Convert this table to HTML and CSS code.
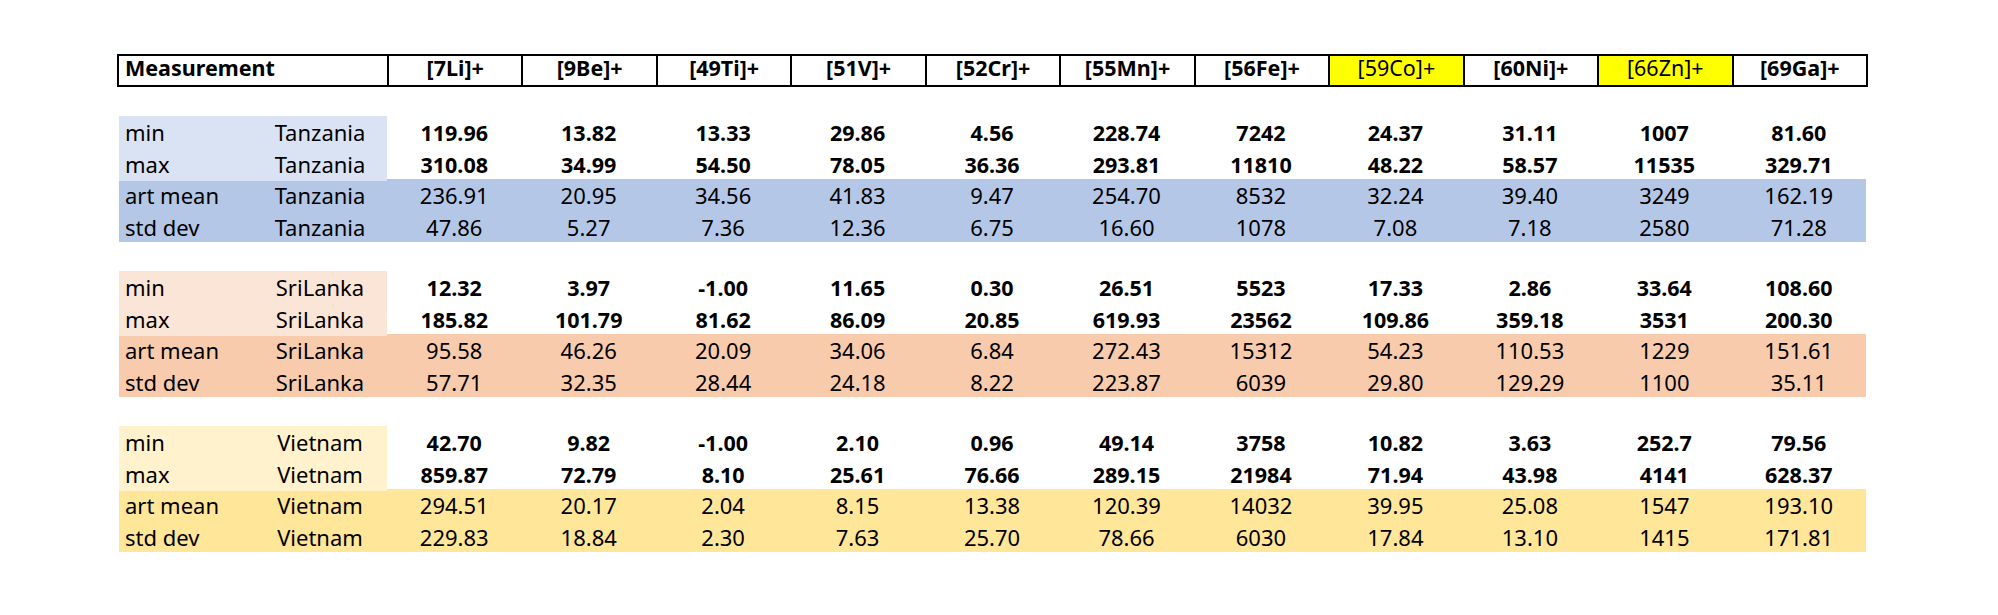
FILE: index.html
```html
<!DOCTYPE html>
<html>
<head>
<meta charset="utf-8">
<link rel="stylesheet" href="styles.css">
</head>
<body>
<div class="sheet">
  <div class="hdr">
    <div class="h first">Measurement</div>
    <div class="h">[7Li]+</div>
    <div class="h">[9Be]+</div>
    <div class="h">[49Ti]+</div>
    <div class="h">[51V]+</div>
    <div class="h">[52Cr]+</div>
    <div class="h">[55Mn]+</div>
    <div class="h">[56Fe]+</div>
    <div class="h hl">[59Co]+</div>
    <div class="h">[60Ni]+</div>
    <div class="h hl">[66Zn]+</div>
    <div class="h">[69Ga]+</div>
  </div>

  <div class="group tz">
    <div class="row ext"><div class="stat">min</div><div class="reg">Tanzania</div><div class="v">119.96</div><div class="v">13.82</div><div class="v">13.33</div><div class="v">29.86</div><div class="v">4.56</div><div class="v">228.74</div><div class="v">7242</div><div class="v">24.37</div><div class="v">31.11</div><div class="v">1007</div><div class="v">81.60</div></div>
    <div class="row ext"><div class="stat">max</div><div class="reg">Tanzania</div><div class="v">310.08</div><div class="v">34.99</div><div class="v">54.50</div><div class="v">78.05</div><div class="v">36.36</div><div class="v">293.81</div><div class="v">11810</div><div class="v">48.22</div><div class="v">58.57</div><div class="v">11535</div><div class="v">329.71</div></div>
    <div class="row agg"><div class="stat">art mean</div><div class="reg">Tanzania</div><div class="v">236.91</div><div class="v">20.95</div><div class="v">34.56</div><div class="v">41.83</div><div class="v">9.47</div><div class="v">254.70</div><div class="v">8532</div><div class="v">32.24</div><div class="v">39.40</div><div class="v">3249</div><div class="v">162.19</div></div>
    <div class="row agg"><div class="stat">std dev</div><div class="reg">Tanzania</div><div class="v">47.86</div><div class="v">5.27</div><div class="v">7.36</div><div class="v">12.36</div><div class="v">6.75</div><div class="v">16.60</div><div class="v">1078</div><div class="v">7.08</div><div class="v">7.18</div><div class="v">2580</div><div class="v">71.28</div></div>
  </div>

  <div class="group sl">
    <div class="row ext"><div class="stat">min</div><div class="reg">SriLanka</div><div class="v">12.32</div><div class="v">3.97</div><div class="v">-1.00</div><div class="v">11.65</div><div class="v">0.30</div><div class="v">26.51</div><div class="v">5523</div><div class="v">17.33</div><div class="v">2.86</div><div class="v">33.64</div><div class="v">108.60</div></div>
    <div class="row ext"><div class="stat">max</div><div class="reg">SriLanka</div><div class="v">185.82</div><div class="v">101.79</div><div class="v">81.62</div><div class="v">86.09</div><div class="v">20.85</div><div class="v">619.93</div><div class="v">23562</div><div class="v">109.86</div><div class="v">359.18</div><div class="v">3531</div><div class="v">200.30</div></div>
    <div class="row agg"><div class="stat">art mean</div><div class="reg">SriLanka</div><div class="v">95.58</div><div class="v">46.26</div><div class="v">20.09</div><div class="v">34.06</div><div class="v">6.84</div><div class="v">272.43</div><div class="v">15312</div><div class="v">54.23</div><div class="v">110.53</div><div class="v">1229</div><div class="v">151.61</div></div>
    <div class="row agg"><div class="stat">std dev</div><div class="reg">SriLanka</div><div class="v">57.71</div><div class="v">32.35</div><div class="v">28.44</div><div class="v">24.18</div><div class="v">8.22</div><div class="v">223.87</div><div class="v">6039</div><div class="v">29.80</div><div class="v">129.29</div><div class="v">1100</div><div class="v">35.11</div></div>
  </div>

  <div class="group vn">
    <div class="row ext"><div class="stat">min</div><div class="reg">Vietnam</div><div class="v">42.70</div><div class="v">9.82</div><div class="v">-1.00</div><div class="v">2.10</div><div class="v">0.96</div><div class="v">49.14</div><div class="v">3758</div><div class="v">10.82</div><div class="v">3.63</div><div class="v">252.7</div><div class="v">79.56</div></div>
    <div class="row ext"><div class="stat">max</div><div class="reg">Vietnam</div><div class="v">859.87</div><div class="v">72.79</div><div class="v">8.10</div><div class="v">25.61</div><div class="v">76.66</div><div class="v">289.15</div><div class="v">21984</div><div class="v">71.94</div><div class="v">43.98</div><div class="v">4141</div><div class="v">628.37</div></div>
    <div class="row agg"><div class="stat">art mean</div><div class="reg">Vietnam</div><div class="v">294.51</div><div class="v">20.17</div><div class="v">2.04</div><div class="v">8.15</div><div class="v">13.38</div><div class="v">120.39</div><div class="v">14032</div><div class="v">39.95</div><div class="v">25.08</div><div class="v">1547</div><div class="v">193.10</div></div>
    <div class="row agg"><div class="stat">std dev</div><div class="reg">Vietnam</div><div class="v">229.83</div><div class="v">18.84</div><div class="v">2.30</div><div class="v">7.63</div><div class="v">25.70</div><div class="v">78.66</div><div class="v">6030</div><div class="v">17.84</div><div class="v">13.10</div><div class="v">1415</div><div class="v">171.81</div></div>
  </div>
</div>
</body>
</html>
```

FILE: styles.css
```css
html, body {
  margin: 0;
  padding: 0;
  background: #ffffff;
}

body {
  font-family: "Noto Sans", "Open Sans", sans-serif;
  font-size: 22px;
  color: #000000;
}

.sheet {
  padding: 54px 0 0 117px;
  width: 1751px;
}

.hdr {
  display: grid;
  grid-template-columns: 268px repeat(11, 1fr);
  height: 33px;
  border: 2px solid #000000;
  box-sizing: border-box;
  font-size: 21.5px;
}

.h {
  border-left: 2px solid #000000;
  font-weight: 700;
  text-align: center;
  line-height: 24px;
  white-space: nowrap;
}

.h.first {
  border-left: 0;
  text-align: left;
  padding-left: 6px;
}

.h.hl {
  background: #ffff00;
  font-weight: 400;
}

.group {
  margin-top: 29px;
  padding: 0 2px;
}

.row {
  display: grid;
  grid-template-columns: 134px 134px repeat(11, 1fr);
  height: 31.5px;
  line-height: 33px;
  white-space: nowrap;
}

.stat {
  padding-left: 6px;
}

.reg {
  text-align: center;
}

.v {
  text-align: center;
}

.ext .v {
  font-weight: 700;
  font-size: 21.5px;
}

.tz .ext .stat, .tz .ext .reg { background: #dae3f3; }
.tz .agg { background: #b4c7e7; }

.sl .ext .stat, .sl .ext .reg { background: #fbe5d6; }
.sl .agg { background: #f8cbad; }

.vn .ext .stat, .vn .ext .reg { background: #fff2cc; }
.vn .agg { background: #ffe699; }
```
